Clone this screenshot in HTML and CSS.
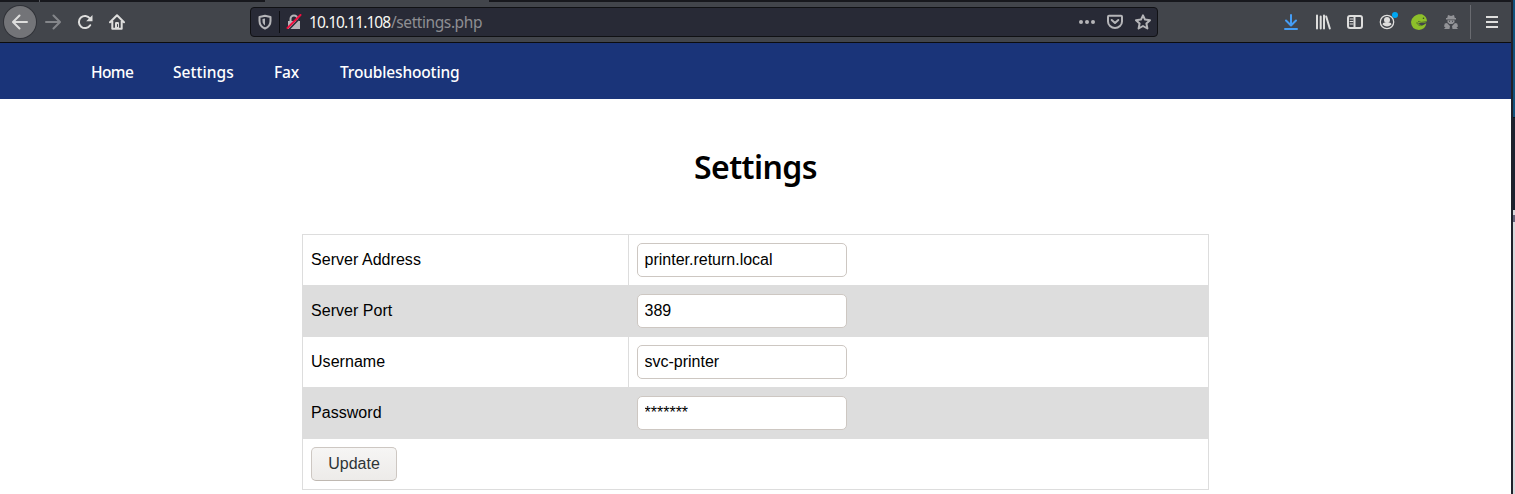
FILE: index.html
```html
<!DOCTYPE html>
<html lang="en">
<head>
<meta charset="utf-8">
<title>Settings</title>
<link rel="stylesheet" href="styles.css">
</head>
<body>
<div class="screen">
<div class="browser">
  <div class="tabs"><span class="tick"></span><span class="tab"></span></div>
  <div class="toolbar">
    <div class="tools-left">
      <span class="back"><svg width="16" height="16" viewBox="0 0 16 16" class="line"><path d="M15 8H1.500M7.500 1.500L1 8l6.500 6.500"/></svg></span>
      <svg width="16" height="16" viewBox="0 0 16 16" class="line dim"><path d="M1 8h13.500M8.500 1.500L15 8l-6.500 6.500"/></svg>
      <svg width="16" height="16" viewBox="0 0 16 16" class="line"><path d="M13.200 11.200A6.100 6.100 0 1 1 13 4.500"/><path d="M15.500 1v6.300H9.200z" class="solid"/></svg>
      <svg width="16" height="16" viewBox="0 0 16 16" class="line"><path d="M1 8.300L8 1.300l7 7M3.300 7v7.700h9.400V7"/><path d="M6 9.200q0-1.200 1.200-1.200h1.600q1.200 0 1.200 1.200V15H6z" class="solid"/><path d="M8.500 10.500v2" class="hole"/></svg>
    </div>
    <div class="url">
      <svg width="14" height="16" viewBox="0 0 14 16" class="line soft"><path d="M7 1.800L12.500 3v4c0 4-2 6-5.500 7.500C3.500 13 1.500 11 1.500 7V3z"/><path d="M7 4.500v7C5.300 10.300 4.500 9 4.500 7V5z" class="solid"/></svg>
      <span class="split"></span>
      <svg width="16" height="16" viewBox="0 0 16 16" class="line soft"><path d="M4.500 7V5a3.500 3.500 0 0 1 7 0v2"/><path d="M2 7h12v8H2z" class="solid"/><path d="M3 15.500L15.500 2.500" class="slash-edge"/><path d="M1.500 14L14.500 1" class="slash"/></svg>
      <span class="address"><span class="host">10.10.11.108</span><span class="path">/settings.php</span></span>
      <span class="url-actions">
        <svg width="16" height="16" viewBox="0 0 16 16" class="dots"><circle cx="2" cy="8" r="2"/><circle cx="8" cy="8" r="2"/><circle cx="14" cy="8" r="2"/></svg>
        <svg width="16" height="16" viewBox="0 0 16 16" class="line soft"><path d="M2 1.800h12q1 0 1 1V7.500a7 6.500 0 0 1-14 0V2.800q0-1 1-1z"/><path d="M4.700 6L8 9l3.300-3"/></svg>
        <svg width="16" height="16" viewBox="0 0 16 16" class="line soft"><path d="M8 1.300l2 4.300 5 .6-3.600 3.300 1 5L8 12l-4.400 2.500 1-5L1 6.200l5-.6z"/></svg>
      </span>
    </div>
    <div class="tools-right">
      <svg width="16" height="16" viewBox="0 0 16 16" class="line blue"><path d="M8 1v10M3 6.500l5 5 5-5M2 15h12"/></svg>
      <svg width="16" height="16" viewBox="0 0 16 16" class="line"><path d="M2 1.500v13M5.700 2.500v12M9 1.500v13M11.200 2.500l3.600 12"/></svg>
      <svg width="16" height="16" viewBox="0 0 16 16" class="line"><rect x="1" y="2" width="14" height="12" rx="2"/><path d="M7.500 2v12"/><path d="M3 5h3M3 7.500h3M3 10h3" class="thin"/></svg>
      <svg width="20" height="20" viewBox="0 0 20 20" class="line account"><circle cx="8" cy="12" r="6.700" class="ring"/><circle cx="8" cy="10" r="3" class="person"/><path d="M3.500 14.500q0-2 2.500-2h4q2.500 0 2.500 2-4.500 4-9 0z" class="person"/><circle cx="16" cy="5" r="3" class="badge"/></svg>
      <svg width="16" height="16" viewBox="0 0 16 16"><path d="M3 2.500C5.500 0 9 0 11 .3L13 1.500q2.700 1.500 2.900 5.500l-1.400 1.500-4.500.3-3 .7q2.500 2.300 5.500 1.500l2.800-1.700Q14.500 15.500 8 16 .3 15.500 0 8q0-3 3-5.500z" fill="#8dc02a"/><path d="M15.500 7.500l-5 .8-3.500-1M5.500 8.500Q7 12.300 11.500 11.500M8 7.300l-1.500 1.500" fill="none" stroke="#57752b" stroke-width=".9"/><circle cx="12.500" cy="4.200" r=".8" fill="#35452b"/></svg>
      <svg width="16" height="16" viewBox="0 0 16 16" class="agent"><path d="M5 1l3 1 3-1 .8 3H13v1.500H3V4h1.200zM4.500 6.300h7v2L9.500 10h-3l-2-1.700zM1.800 9.500L4 9l3 3-.5 3H1l1.500-1.700L1 12.500zM14.200 9.500L12 9l-3 3 .5 3H15l-1.500-1.700 1.500-.8z"/><path d="M6 7.300h1M9 7.300h1" stroke="#42454b" stroke-width="1"/></svg>
      <span class="divider"></span>
      <svg width="14" height="14" viewBox="0 0 14 14" class="line menu"><path d="M1 2h12M1 7h12M1 12h12"/></svg>
    </div>
  </div>
  <nav class="nav"><a class="home">Home</a><a class="settings">Settings</a><a class="fax">Fax</a><a class="trouble">Troubleshooting</a></nav>
  <main class="main">
    <h1 class="title">Settings</h1>
    <table class="form">
      <tr><td class="label">Server Address</td><td><input class="field" value="printer.return.local"></td></tr>
      <tr><td class="label">Server Port</td><td><input class="field" value="389"></td></tr>
      <tr><td class="label">Username</td><td><input class="field" value="svc-printer"></td></tr>
      <tr><td class="label">Password</td><td><input class="field" value="*******"></td></tr>
      <tr><td colspan="2"><button class="update">Update</button></td></tr>
    </table>
  </main>
</div>
<aside class="desktop"><div class="wall"></div><div class="dark"></div><div class="pale"><i class="fleck"></i></div></aside>
</div>
</body>
</html>
```
FILE: styles.css
```css
* { box-sizing: border-box; }
body { margin: 0; overflow: hidden; background: #fff; font: 16px "Liberation Sans", Arial, sans-serif; color: #000; }
.screen { display: flex; height: 494px; }
.browser { width: 1511px; flex: none; }
.tabs { height: 2px; background: #17181d; display: flex; }
.tick { width: 1px; margin-left: 39px; background: #55575d; }
.tab { width: 224px; margin-left: 225px; background: #42454b; }
.toolbar { height: 41px; background: #42454b; border-bottom: 1px solid #0c0c0d; display: flex; align-items: center; }
.toolbar svg { display: block; flex: none; }
.tools-left { display: flex; align-items: center; gap: 16px; width: 250px; padding-left: 4px; }
.back { width: 32px; height: 32px; border-radius: 50%; background: #737478; box-shadow: 0 0 0 1px #303238; display: flex; align-items: center; justify-content: center; margin-right: -7px; }
.line { fill: none; stroke: #dededd; stroke-width: 2; stroke-linecap: round; stroke-linejoin: round; }
.dim { stroke: #84868a; }
.solid { fill: #dededd; stroke: none; }
.hole { stroke: #42454b; stroke-width: 1; }
.soft { stroke: #b5b5b8; }
.soft .solid { fill: #b5b5b8; }
.slash-edge { stroke: #282a36; stroke-width: 1.5; }
.slash { stroke: #f0103f; stroke-width: 2; }
.url { width: 908px; height: 30px; border: 1px solid #101114; border-radius: 4px; background: #282a36; display: flex; align-items: center; padding-left: 7px; }
.split { width: 1px; height: 22px; background: #0d0e12; margin: 0 6px 0 7px; }
.address { margin-left: 7px; font: 15.5px/26px "Noto Sans", sans-serif; display: flex; }
.host { width: 82px; color: #f8f8f2; letter-spacing: -.92px; }
.path { color: #8e8e92; letter-spacing: -.42px; white-space: nowrap; }
.url-actions { display: flex; gap: 12px; margin-left: auto; padding-right: 6px; }
.dots { fill: #b5b5b8; }
.tools-right { display: flex; align-items: center; gap: 16px; margin-left: 125px; }
.blue { stroke: #459df5; }
.thin { stroke-width: 1; }
.account { margin: -4px -4px 0 0; }
.ring { stroke-width: 1.3; }
.person { fill: #dededd; stroke: none; }
.badge { fill: #00a8f4; stroke: none; }
.agent { fill: #929397; }
.divider { width: 1px; height: 34px; background: #696b70; margin-left: -5px; }
.menu { margin-left: -2px; stroke-linecap: butt; }
.nav { height: 56px; background: #1a3479; display: flex; gap: 40px; padding: 0 0 0 91px; color: #fff; font: 500 15.5px/59px "Noto Sans", sans-serif; white-space: nowrap; }
.nav a { flex: none; }
.home { width: 42px; letter-spacing: -.6px; }
.settings { width: 61px; letter-spacing: .05px; }
.fax { width: 26px; letter-spacing: -.1px; }
.trouble { width: 121px; letter-spacing: -.15px; }
.main { height: 395px; display: flex; flex-direction: column; align-items: center; }
.title { font: 600 32px/44px "Noto Sans", sans-serif; margin: 46px 0 45px; letter-spacing: -.6px; }
.form { width: 907px; border-collapse: collapse; table-layout: fixed; }
.form td { border: 1px solid #ddd; height: 51px; padding: 0 8px; }
.form tr:nth-child(even) { background: #ddd; }
.label { width: 326px; letter-spacing: .04px; }
.field { display: block; width: 210px; height: 34px; border: 1px solid #cdc7c2; border-radius: 5px; padding: 0 6.500px 1px; background: #fff; color: #000; font: inherit; outline: none; }
.update { display: block; width: 86px; height: 34px; border: 1px solid #cdc7c2; border-bottom-color: #bfb8b1; border-radius: 5px; background: linear-gradient(#f6f5f4, #edebe9); color: #2e3436; font: inherit; padding: 0 0 1px; }
.desktop { width: 4px; border-left: 2px solid #20222b; }
.wall { height: 118px; background: #12527c; border-bottom: 1px solid #071522; }
.dark { height: 92px; background: #1c2230; }
.pale { height: 284px; background: #d7d7da; padding-top: 5px; }
.fleck { display: block; width: 2px; height: 7px; background: #626078; }
```
